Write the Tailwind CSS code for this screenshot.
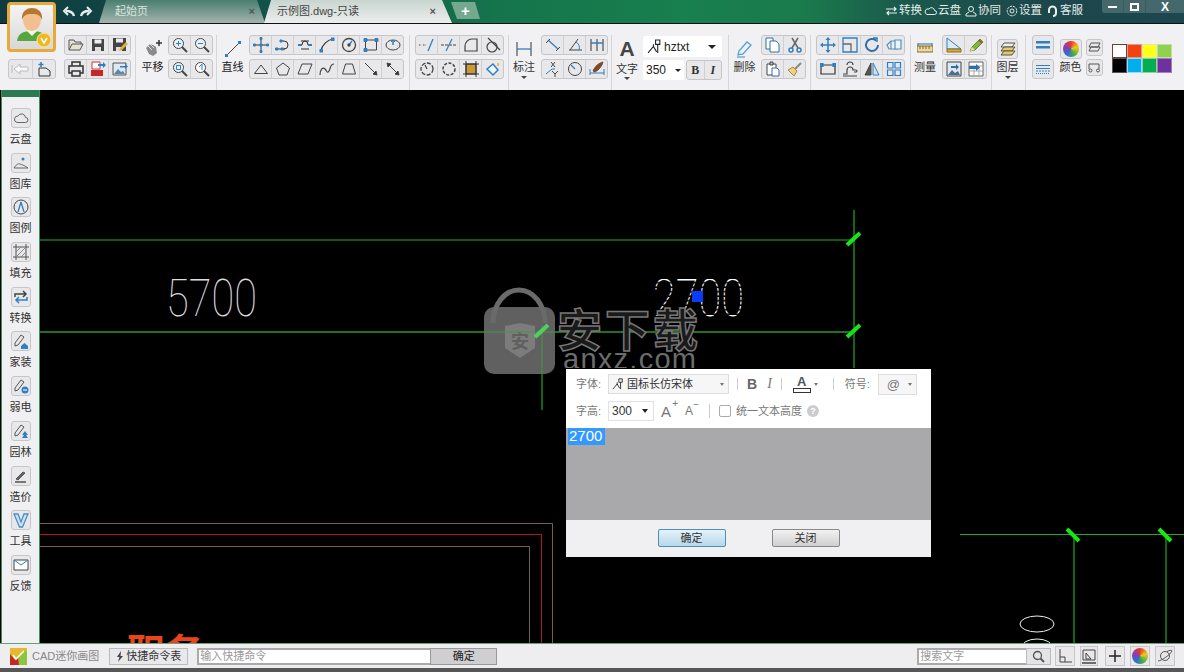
<!DOCTYPE html>
<html lang="en">
  <head>
    <meta charset="UTF-8" />
    <script src="https://cdn.jsdelivr.net/npm/@tailwindcss/browser@4"></script>
    <title>CAD迷你画图</title>
  </head>

  <body class="w-[1184px] h-[672px] overflow-hidden bg-black font-['Liberation_Sans','Noto_Sans_CJK_SC',sans-serif] text-[#333]">
    <div class="relative flex flex-col h-[672px]">

      <!-- title bar -->
      <div class="relative flex h-6 shrink-0 border-b border-[#111] bg-[linear-gradient(90deg,#103a40_0%,#135549_25%,#15744c_42%,#187f4e_58%,#1a7a4c_68%,#1b5a4c_76%,#1c474b_88%,#1d4650_100%)]">
        <!-- undo redo -->
        <div class="flex gap-[5px] ml-[62px] mt-[6px] h-3">
          <svg width="13" height="11" viewBox="0 0 13 11" fill="none" stroke="#e6eeee" stroke-width="2.4"><path d="M12 10C11 6 8 5 4 5"/><path d="M6 1L2 5l4 4" stroke-width="2"/></svg>
          <svg width="13" height="11" viewBox="0 0 13 11" fill="none" stroke="#e6eeee" stroke-width="2.4"><path d="M1 10C2 6 5 5 9 5"/><path d="M7 1l4 4-4 4" stroke-width="2"/></svg>
        </div>
        <!-- tabs -->
        <div class="flex items-center ml-[6px] w-[166px] h-[23px] pl-[16px] pr-[8px] justify-between text-[11px] text-[#d9e4df] [clip-path:polygon(7px_0,158px_0,166px_100%,0_100%)] bg-[linear-gradient(180deg,#4a7f70,#a4b3ae)]">
          <span>起始页</span>
          <span class="text-[11px] font-bold text-[#555] mr-[2px]">×</span>
        </div>
        <div class="flex items-center -ml-[1px] w-[188px] h-[23px] pl-[13px] pr-[8px] justify-between text-[11px] text-[#444] [clip-path:polygon(7px_0,178px_0,188px_100%,0_100%)] bg-[linear-gradient(180deg,#c9d5d0,#eceeed)]">
          <span>示例图.dwg-只读</span>
          <span class="font-bold text-[#555] mr-[8px]">×</span>
        </div>
        <div class="flex items-center justify-center ml-[-1px] mt-[2px] w-[29px] h-[17px] text-[15px] leading-none font-bold text-white [clip-path:polygon(0_0,24px_0,29px_100%,6px_100%)] bg-[#74a88f]">+</div>
        <!-- right menu -->
        <div class="absolute left-[885px] top-[2px] flex items-center h-[18px] text-[11.500px] text-[#e4ebea]">
          <svg width="13" height="12" viewBox="0 0 13 12" fill="none" stroke="#e6eeee" stroke-width="1.2"><path d="M1 4h10M9 2l2 2-2 2M12 8H2M4 6L2 8l2 2"/></svg>
          <span class="ml-px">转换</span>
          <svg class="ml-[2px]" width="13" height="10" viewBox="0 0 13 10" fill="none" stroke="#e6eeee"><path d="M3 8.500h7.500a2 2 0 000-4A3 3 0 005 3 2.800 2.800 0 003 8.500z"/></svg>
          <span class="ml-px">云盘</span>
          <svg class="ml-[4px]" width="12" height="12" viewBox="0 0 12 12" fill="none" stroke="#e6eeee"><circle cx="6" cy="4" r="2.500"/><path d="M1 11V9l3-2M11 11V9L8 7M1 11h10"/></svg>
          <span class="ml-px">协同</span>
          <svg class="ml-[5px]" width="12" height="12" viewBox="0 0 12 12" fill="none" stroke="#e6eeee"><circle cx="6" cy="6" r="2"/><circle cx="6" cy="6" r="4.800" stroke-dasharray="2.500 0.800"/></svg>
          <span class="ml-px">设置</span>
          <svg class="ml-[5px]" width="11" height="13" viewBox="0 0 11 13" fill="none" stroke="#e6eeee" stroke-width="2"><path d="M2 8V5a3.500 3.500 0 017 0v3a3 3 0 01-3 3"/></svg>
          <span class="ml-[2px]">客服</span>
        </div>
        <!-- window buttons -->
        <div class="absolute left-[1102px] top-0 flex h-[13px] w-[82px] rounded-bl-[3px] bg-[#5f7f7f]/60 text-white">
          <div class="w-[22px] flex items-center justify-center border-r border-[#3d5c5c]"><div class="w-[9px] h-[2px] bg-white"></div></div>
          <div class="w-[22px] flex items-center justify-center border-r border-[#3d5c5c]"><div class="w-[9px] h-[8px] border-2 border-white"></div></div>
          <div class="flex-1 flex items-center justify-center text-[12px] leading-none font-bold">X</div>
        </div>
      </div>

      <!-- avatar -->
      <div class="absolute left-[7px] top-[2px] z-10 w-[49px] h-[50px] rounded-[4px] border-[3px] border-[#e8a93c] bg-[linear-gradient(180deg,#f4f4f4,#d8d8d8)] flex items-center justify-center">
        <svg width="38" height="42" viewBox="0 0 38 42">
          <path d="M4 35c1-8 7-10 15-10s14 2 15 10z" fill="#58a73c"/>
          <path d="M14 25l5 5 5-5-2-3h-6z" fill="#f3f3f0"/>
          <ellipse cx="19" cy="14" rx="9" ry="11" fill="#f2c08e"/>
          <path d="M9 14C8 5 14 2 19 2s11 3 10 12c-2-5-4-6-10-6s-8 1-10 6z" fill="#b5782f"/>
          <circle cx="31" cy="34" r="7" fill="#f0b820" stroke="#fbe7a0"/>
          <path d="M28 32l3 5 3-5" fill="none" stroke="#fff" stroke-width="1.500"/>
        </svg>
      </div>

      <!-- ribbon toolbar -->
      <div class="flex h-[66px] shrink-0 pt-[11px] bg-[#f1f0f3] text-[11px] leading-none">
        <div class="ml-[8px] w-[48px] flex flex-col justify-end h-11">
          <div class="flex h-5 rounded-[3px] border border-[#c6c6c8] bg-[#e8e8ea]">
            <div class="flex-1 flex items-center justify-center border-r border-[#d0d0d2]"><svg width="18" height="14" viewBox="0 0 18 14" fill="#f8f8f8" stroke="#bbb"><path d="M3 7l6-5v3h8v4H9v3z"/><path d="M1 3v8"/></svg></div>
            <div class="flex-1 flex items-center justify-center"><svg width="16" height="16" viewBox="0 0 16 16" fill="none" stroke="#333"><path d="M3 7h7l4 3v5H3z"/><path d="M5 1v5M2.500 3.500h5" stroke="#2f7fc1" stroke-width="1.500"/></svg></div>
          </div>
        </div>

        <div class="ml-[8px] w-[67px] flex flex-col gap-1">
          <div class="flex h-5 rounded-[3px] border border-[#c6c6c8] bg-[#e8e8ea]">
            <div class="flex-1 flex items-center justify-center border-r border-[#d0d0d2]"><svg width="16" height="14" viewBox="0 0 16 14" fill="#e5e2d4" stroke="#555"><path d="M1 12V2h5l1 2h6v2"/><path d="M1 12l3-6h11l-3 6z"/></svg></div>
            <div class="flex-1 flex items-center justify-center border-r border-[#d0d0d2]"><svg width="14" height="14" viewBox="0 0 14 14" fill="#444"><path d="M1 1h12v12H1z"/><path d="M3.500 1.500h7v4h-7z" fill="#eee"/><path d="M4 9h6v4H4z" fill="#ddd"/></svg></div>
            <div class="flex-1 flex items-center justify-center"><svg width="16" height="16" viewBox="0 0 16 16" fill="#444"><path d="M1 1h13v13H1z"/><path d="M4 1.500h7v4H4z" fill="#eee"/><path d="M4 10h6v4H4z" fill="#ddd"/><path d="M7 14l1-3 6-6 2 2-6 6z" fill="#e0b040"/></svg></div>
          </div>
          <div class="flex h-5 rounded-[3px] border border-[#c6c6c8] bg-[#e8e8ea]">
            <div class="flex-1 flex items-center justify-center border-r border-[#d0d0d2]"><svg width="16" height="16" viewBox="0 0 16 16" fill="none" stroke="#333" stroke-width="1.500"><path d="M4 5V1h8v4M4 12H1V5h14v7h-3M4 10h8v5H4z"/></svg></div>
            <div class="flex-1 flex items-center justify-center border-r border-[#d0d0d2]"><svg width="16" height="16" viewBox="0 0 16 16"><path d="M2 1h8v7H2z" fill="#fff" stroke="#c33"/><path d="M1 9h12v6H1z" fill="#c62828"/><path d="M8 3h5V1l3 3-3 3V5H8z" fill="#2f7fc1"/></svg></div>
            <div class="flex-1 flex items-center justify-center"><svg width="16" height="16" viewBox="0 0 16 16"><path d="M1 2h13v12H1z" fill="#dfe8f0" stroke="#555"/><path d="M2 13l4-5 3 3 2-1 2 3z" fill="#5c87a8"/><path d="M8 5h5V3l3 2.500L13 8V6.500H8z" fill="#2f7fc1"/></svg></div>
          </div>
        </div>

        <div class="ml-[4px] w-px h-[56px] bg-[#d6d6d8]"></div>

        <div class="ml-[5px] w-[23px] flex flex-col items-center">
          <svg class="mt-[3px]" width="20" height="20" viewBox="0 0 20 20"><path d="M3 10l4-4 3 1 3 2 1 6-4 3-4-2z" fill="#8a8a8a"/><path d="M5 8l4 4M7 6l4 4" stroke="#ddd"/><path d="M16 2v6M13 5h6" stroke="#333" stroke-width="1.500"/></svg>
          <span class="mt-[4px] text-[#222]">平移</span>
        </div>

        <div class="ml-[4px] w-[45px] flex flex-col gap-1">
          <div class="flex h-5 rounded-[3px] border border-[#c6c6c8] bg-[#e8e8ea]">
            <div class="flex-1 flex items-center justify-center border-r border-[#d0d0d2]"><svg width="16" height="16" viewBox="0 0 16 16" fill="#e8f2fa" stroke="#444"><circle cx="6.500" cy="6.500" r="5"/><path d="M10 10l5 5" stroke-width="2"/><path d="M4 6.500h5M6.500 4v5" stroke="#2f7fc1"/></svg></div>
            <div class="flex-1 flex items-center justify-center"><svg width="16" height="16" viewBox="0 0 16 16" fill="#e8f2fa" stroke="#444"><circle cx="6.500" cy="6.500" r="5"/><path d="M10 10l5 5" stroke-width="2"/><path d="M4 6.500h5" stroke="#2f7fc1"/></svg></div>
          </div>
          <div class="flex h-5 rounded-[3px] border border-[#c6c6c8] bg-[#e8e8ea]">
            <div class="flex-1 flex items-center justify-center border-r border-[#d0d0d2]"><svg width="16" height="16" viewBox="0 0 16 16" fill="#e8f2fa" stroke="#444"><circle cx="6.500" cy="6.500" r="5"/><path d="M10 10l5 5" stroke-width="2"/><path d="M4.500 4.500h4v4h-4z" stroke="#2f7fc1"/></svg></div>
            <div class="flex-1 flex items-center justify-center"><svg width="16" height="16" viewBox="0 0 16 16" fill="#fff" stroke="#444"><circle cx="6.500" cy="6.500" r="5"/><path d="M10 10l5 5" stroke-width="2"/><path d="M5 6l3-3v6" fill="none" stroke="#2f7fc1"/></svg></div>
          </div>
        </div>

        <div class="ml-[3px] w-px h-[56px] bg-[#d6d6d8]"></div>

        <div class="ml-[4px] w-[23px] flex flex-col items-center">
          <svg class="mt-[5px]" width="18" height="18" viewBox="0 0 18 18" fill="none"><path d="M2 16L16 2" stroke="#444"/><rect x="1" y="14" width="3" height="3" fill="#2f7fc1"/><rect x="14" y="1" width="3" height="3" fill="#2f7fc1"/></svg>
          <span class="mt-[4px] text-[#222]">直线</span>
        </div>

        <!-- draw group -->
        <div class="ml-[5px] w-[155px] flex flex-col gap-1">
          <div class="flex h-5 rounded-[3px] border border-[#c6c6c8] bg-[#e8e8ea]">
            <div class="flex-1 flex items-center justify-center border-r border-[#d0d0d2]"><svg width="16" height="16" viewBox="0 0 16 16" fill="#2f7fc1" stroke="#2f7fc1"><path d="M1 8h14M8 1v14" stroke="#333"/><path d="M0.500 7h2v2h-2zM7 0.500h2v2H7zM7 13.500h2v2H7zM13.500 7h2v2h-2zM7 7h2v2H7z"/></svg></div>
            <div class="flex-1 flex items-center justify-center border-r border-[#d0d0d2]"><svg width="16" height="16" viewBox="0 0 16 16" fill="none" stroke="#333"><path d="M2 12h8M6 4h3a4 4 0 010 8"/><path d="M0.500 11h2.500v2H0.500zM6 11h2.500v2H6zM5 3h2v2H5z" fill="#2f7fc1" stroke="#2f7fc1"/></svg></div>
            <div class="flex-1 flex items-center justify-center border-r border-[#d0d0d2]"><svg width="16" height="16" viewBox="0 0 16 16" fill="none" stroke="#333"><path d="M4 4h8M4 12h8"/><path d="M1 8h4M11 8h4" stroke="#2f7fc1" stroke-width="2"/><path d="M5 8a3 4 0 016 0" /></svg></div>
            <div class="flex-1 flex items-center justify-center border-r border-[#d0d0d2]"><svg width="16" height="16" viewBox="0 0 16 16" fill="none" stroke="#333"><path d="M2 14C3 8 8 3 14 2" stroke-width="1.200"/><rect x="1" y="12.500" width="2.500" height="2.500" fill="#2f7fc1" stroke="#2f7fc1"/><rect x="12.500" y="1" width="2.500" height="2.500" fill="#2f7fc1" stroke="#2f7fc1"/></svg></div>
            <div class="flex-1 flex items-center justify-center border-r border-[#d0d0d2]"><svg width="16" height="16" viewBox="0 0 16 16" fill="none" stroke="#444" stroke-width="1.300"><circle cx="8" cy="8" r="6.500"/><path d="M8 8l3-4" stroke="#2f7fc1"/><circle cx="8" cy="8" r="1" fill="#2f7fc1"/></svg></div>
            <div class="flex-1 flex items-center justify-center border-r border-[#d0d0d2]"><svg width="16" height="16" viewBox="0 0 16 16" fill="none" stroke="#444"><path d="M2.500 3h11v10h-11z"/><path d="M1 1.500h3v3H1zM12 1.500h3v3h-3zM1 11.500h3v3H1z" fill="#2f7fc1" stroke="#2f7fc1"/></svg></div>
            <div class="flex-1 flex items-center justify-center"><svg width="16" height="16" viewBox="0 0 16 16" fill="none" stroke="#444"><ellipse cx="8" cy="8" rx="7" ry="5"/><path d="M8 8V3" stroke="#2f7fc1" stroke-width="1.500"/><path d="M6 5l2-2 2 2" stroke="#2f7fc1"/></svg></div>
          </div>
          <div class="flex h-5 rounded-[3px] border border-[#c6c6c8] bg-[#e8e8ea]">
            <div class="flex-1 flex items-center justify-center border-r border-[#d0d0d2]"><svg width="16" height="16" viewBox="0 0 16 16" fill="none" stroke="#444"><path d="M1.500 12.500L8 4l6.500 8.500z"/></svg></div>
            <div class="flex-1 flex items-center justify-center border-r border-[#d0d0d2]"><svg width="16" height="16" viewBox="0 0 16 16" fill="none" stroke="#444"><path d="M8 2l6.500 5-2.500 7H4L1.500 7z"/></svg></div>
            <div class="flex-1 flex items-center justify-center border-r border-[#d0d0d2]"><svg width="16" height="16" viewBox="0 0 16 16" fill="none" stroke="#444"><path d="M5 3h10l-4 10H1z"/></svg></div>
            <div class="flex-1 flex items-center justify-center border-r border-[#d0d0d2]"><svg width="16" height="16" viewBox="0 0 16 16" fill="none" stroke="#444" stroke-width="1.200"><path d="M1 14c0-6 3-8 5-6s2 5 4 2 1-7 5-7"/></svg></div>
            <div class="flex-1 flex items-center justify-center border-r border-[#d0d0d2]"><svg width="16" height="16" viewBox="0 0 16 16" fill="none" stroke="#444"><path d="M4.500 3h7l3 10h-13z"/></svg></div>
            <div class="flex-1 flex items-center justify-center border-r border-[#d0d0d2]"><svg width="16" height="16" viewBox="0 0 16 16" fill="#333" stroke="#444"><path d="M2 2l10 10"/><path d="M14 14l-4-1 3-3z"/></svg></div>
            <div class="flex-1 flex items-center justify-center"><svg width="16" height="16" viewBox="0 0 16 16" fill="#333" stroke="#444"><path d="M3 3l10 10"/><path d="M14 14l-4-1 3-3zM2 2l4 1-3 3z"/></svg></div>
          </div>
        </div>

        <div class="ml-[5px] w-px h-[56px] bg-[#d6d6d8]"></div>

        <!-- modify group -->
        <div class="ml-[5px] w-[89px] flex flex-col gap-1">
          <div class="flex h-5 rounded-[3px] border border-[#c6c6c8] bg-[#e8e8ea]">
            <div class="flex-1 flex items-center justify-center border-r border-[#d0d0d2]"><svg width="16" height="16" viewBox="0 0 16 16" fill="none" stroke="#444"><path d="M0 8h2M4 8h3" stroke-dasharray="1.500 1"/><path d="M14 2L9 14" stroke="#2f7fc1" stroke-width="1.300"/></svg></div>
            <div class="flex-1 flex items-center justify-center border-r border-[#d0d0d2]"><svg width="16" height="16" viewBox="0 0 16 16" fill="none" stroke="#444"><path d="M0 8h16" stroke-dasharray="3 1"/><path d="M11 2L5 14" stroke="#2f7fc1" stroke-width="1.300"/></svg></div>
            <div class="flex-1 flex items-center justify-center border-r border-[#d0d0d2]"><svg width="16" height="16" viewBox="0 0 16 16" fill="none" stroke="#444" stroke-width="1.200"><path d="M2 14V9a7 7 0 017-7h5v12z"/></svg></div>
            <div class="flex-1 flex items-center justify-center"><svg width="16" height="16" viewBox="0 0 16 16" fill="none" stroke="#444" stroke-width="1.200"><circle cx="7" cy="10" r="5"/><path d="M3 1l12 12"/></svg></div>
          </div>
          <div class="flex h-5 rounded-[3px] border border-[#c6c6c8] bg-[#e8e8ea]">
            <div class="flex-1 flex items-center justify-center border-r border-[#d0d0d2]"><svg width="16" height="16" viewBox="0 0 16 16" fill="none" stroke="#444" stroke-width="1.300"><circle cx="8" cy="8" r="6" stroke-dasharray="4 1.500"/><path d="M6 4l2 4" /></svg></div>
            <div class="flex-1 flex items-center justify-center border-r border-[#d0d0d2]"><svg width="16" height="16" viewBox="0 0 16 16" fill="none" stroke="#444" stroke-width="1.500"><circle cx="8" cy="8" r="6" stroke-dasharray="3 1.500"/></svg></div>
            <div class="flex-1 flex items-center justify-center border-r border-[#d0d0d2]"><svg width="16" height="16" viewBox="0 0 16 16" fill="#c99a33" stroke="#333"><path d="M3 3h10v10H3z"/><path d="M0 3h16M0 13h16M3 0v16M13 0v16" fill="none"/></svg></div>
            <div class="flex-1 flex items-center justify-center"><svg width="16" height="16" viewBox="0 0 16 16" fill="#f2f6fa" stroke="#2f7fc1" stroke-width="1.500"><path d="M2 8l6-5 5 6-5 5z"/><path d="M13 2v3" stroke="#e8a93c"/></svg></div>
          </div>
        </div>

        <div class="ml-[4px] w-px h-[56px] bg-[#d6d6d8]"></div>

        <div class="ml-[3px] w-[24px] flex flex-col items-center">
          <svg class="mt-[5px]" width="18" height="18" viewBox="0 0 18 18" fill="none" stroke="#2f7fc1"><path d="M2 2v14M16 2v14" stroke="#333"/><path d="M2 9h14" stroke-width="1.300"/></svg>
          <span class="mt-[4px] text-[#333]">标注</span>
          <div class="mt-[3px] w-0 h-0 border-x-[3px] border-x-transparent border-t-[3px] border-t-[#444]"></div>
        </div>

        <div class="ml-[5px] w-[67px] flex flex-col gap-1">
          <div class="flex h-5 rounded-[3px] border border-[#c6c6c8] bg-[#e8e8ea]">
            <div class="flex-1 flex items-center justify-center border-r border-[#d0d0d2]"><svg width="16" height="16" viewBox="0 0 16 16" fill="none" stroke="#444"><path d="M3 3l10 9" stroke="#2f7fc1" stroke-width="1.300"/><path d="M1 6l4-4M11 14l4-4"/></svg></div>
            <div class="flex-1 flex items-center justify-center border-r border-[#d0d0d2]"><svg width="16" height="16" viewBox="0 0 16 16" fill="none" stroke="#444"><path d="M2 13h13M3 13L11 2"/><path d="M9 5a7 7 0 013 8" stroke="#2f7fc1"/></svg></div>
            <div class="flex-1 flex items-center justify-center"><svg width="16" height="16" viewBox="0 0 16 16" fill="none" stroke="#333"><path d="M2 2v12M8 2v12M14 2v12"/><path d="M2 6h12" stroke="#2f7fc1" stroke-width="1.500"/></svg></div>
          </div>
          <div class="flex h-5 rounded-[3px] border border-[#c6c6c8] bg-[#e8e8ea]">
            <div class="flex-1 flex items-center justify-center border-r border-[#d0d0d2]"><svg width="16" height="16" viewBox="0 0 16 16" fill="none" stroke="#444"><path d="M1 13l6-5 3 0" stroke="#2f7fc1"/><path d="M6 1l4 5M10 1L6 6M7 10l3 3 3-3M10 13v3"/></svg></div>
            <div class="flex-1 flex items-center justify-center border-r border-[#d0d0d2]"><svg width="16" height="16" viewBox="0 0 16 16" fill="none" stroke="#444"><circle cx="8" cy="8" r="6.500"/><path d="M8 8L4 4" stroke="#2f7fc1" stroke-width="1.300"/></svg></div>
            <div class="flex-1 flex items-center justify-center"><svg width="16" height="16" viewBox="0 0 16 16" fill="none" stroke="#2f7fc1"><path d="M1 8v6M15 8v6M1 12h14"/><path d="M4 10c2-5 6-8 10-9-1 4-4 8-8 10z" fill="#7c4a2a" stroke="#7c4a2a"/></svg></div>
          </div>
        </div>

        <div class="ml-[3px] w-px h-[56px] bg-[#d6d6d8]"></div>

        <div class="ml-[3px] w-[24px] flex flex-col items-center">
          <span class="mt-[2px] text-[21px] leading-[24px] font-bold text-[#444]">A</span>
          <span class="mt-[3px] text-[#333]">文字</span>
          <div class="mt-[2px] w-0 h-0 border-x-[3px] border-x-transparent border-t-[3px] border-t-[#444]"></div>
        </div>

        <div class="ml-[4px] w-[79px] flex flex-col gap-[3px] pt-px">
          <div class="flex items-center h-[21px] px-1 bg-white rounded-[2px] text-[12px] text-[#222]">
            <svg width="15" height="15" viewBox="0 0 14 14" fill="none" stroke="#222"><path d="M8 1h4v4H8zM1 13l5-6 3 5M6 5v3M10 5v8"/></svg>
            <span class="ml-[2px]">hztxt</span>
            <div class="ml-auto mr-[2px] w-0 h-0 border-x-4 border-x-transparent border-t-4 border-t-[#222]"></div>
          </div>
          <div class="flex gap-[2px] h-5">
            <div class="flex items-center w-[41px] px-[3px] bg-white rounded-[2px] text-[12px] text-[#222]">
              <span>350</span>
              <div class="ml-auto w-0 h-0 border-x-[3px] border-x-transparent border-t-[3px] border-t-[#222]"></div>
            </div>
            <div class="flex flex-1 rounded-[3px] border border-[#c6c6c8] bg-[#e8e8ea] font-['Liberation_Serif',serif] text-[12px] font-bold text-[#333]">
              <div class="flex-1 flex items-center justify-center border-r border-[#d0d0d2]">B</div>
              <div class="flex-1 flex items-center justify-center italic">I</div>
            </div>
          </div>
        </div>

        <div class="ml-[6px] w-px h-[56px] bg-[#d6d6d8]"></div>

        <div class="ml-[4px] w-[23px] flex flex-col items-center">
          <svg class="mt-[5px]" width="18" height="18" viewBox="0 0 18 18" fill="#eaf3fa" stroke="#5a9fd4" stroke-width="1.300"><path d="M2 15l1-4 8-9 4 3-8 9z"/><path d="M1 17h8" stroke="#5a9fd4"/></svg>
          <span class="mt-[4px] text-[#333]">删除</span>
        </div>

        <div class="ml-[5px] w-[45px] flex flex-col gap-1">
          <div class="flex h-5 rounded-[3px] border border-[#c6c6c8] bg-[#e8e8ea]">
            <div class="flex-1 flex items-center justify-center border-r border-[#d0d0d2]"><svg width="16" height="16" viewBox="0 0 16 16" fill="#fff" stroke="#2f6fa8"><path d="M1 1h7v11H1z"/><path d="M5 4h6l3 3v8H5z"/></svg></div>
            <div class="flex-1 flex items-center justify-center"><svg width="16" height="16" viewBox="0 0 16 16" fill="none" stroke="#2f7fc1" stroke-width="1.500"><circle cx="4" cy="13" r="2"/><circle cx="12" cy="13" r="2"/><path d="M5 11l6-10M11 11L5 1" stroke="#666"/></svg></div>
          </div>
          <div class="flex h-5 rounded-[3px] border border-[#c6c6c8] bg-[#e8e8ea]">
            <div class="flex-1 flex items-center justify-center border-r border-[#d0d0d2]"><svg width="16" height="16" viewBox="0 0 16 16" fill="#fff" stroke="#444"><path d="M2 3h9v11H2z"/><path d="M5 1h3v3H5z" fill="#bbb"/><path d="M7 7h5l2 2v6H7z" stroke="#2f6fa8"/></svg></div>
            <div class="flex-1 flex items-center justify-center"><svg width="16" height="16" viewBox="0 0 16 16"><path d="M1 9l5-3 4 4-3 5z" fill="#f0d080" stroke="#b08a30"/><path d="M8 8l6-6" stroke="#888" stroke-width="2"/></svg></div>
          </div>
        </div>

        <div class="ml-[4px] w-px h-[56px] bg-[#d6d6d8]"></div>

        <div class="ml-[5px] w-[89px] flex flex-col gap-1">
          <div class="flex h-5 rounded-[3px] border border-[#c6c6c8] bg-[#e8e8ea]">
            <div class="flex-1 flex items-center justify-center border-r border-[#d0d0d2]"><svg width="16" height="16" viewBox="0 0 16 16" fill="#2f7fc1" stroke="#2f7fc1"><path d="M1 8h14M8 1v14" stroke-width="1.500"/><path d="M8 0l2.500 3h-5zM8 16l2.500-3h-5zM0 8l3-2.500v5zM16 8l-3-2.500v5z" stroke="none"/></svg></div>
            <div class="flex-1 flex items-center justify-center border-r border-[#d0d0d2]"><svg width="16" height="16" viewBox="0 0 16 16" fill="none" stroke="#2f7fc1" stroke-width="1.300"><path d="M1 1h14v14H1z"/><path d="M1 7h8v8" stroke="#666"/></svg></div>
            <div class="flex-1 flex items-center justify-center border-r border-[#d0d0d2]"><svg width="16" height="16" viewBox="0 0 16 16" fill="none" stroke="#2f6fa8" stroke-width="2"><path d="M12.200 3.700A6 6 0 1 0 14 8"/><path d="M9 1l4 0 0 4" stroke-width="1.300"/></svg></div>
            <div class="flex-1 flex items-center justify-center"><svg width="16" height="16" viewBox="0 0 16 16" fill="#eaf3fa" stroke="#5a8fb8" stroke-width="1.200"><path d="M1 8l4-4h6v8H3z"/><path d="M9 3h6v9H9z"/><path d="M5 4v8"/></svg></div>
          </div>
          <div class="flex h-5 rounded-[3px] border border-[#c6c6c8] bg-[#e8e8ea]">
            <div class="flex-1 flex items-center justify-center border-r border-[#d0d0d2]"><svg width="16" height="16" viewBox="0 0 16 16" fill="none" stroke="#333" stroke-width="1.200"><path d="M1 4h14v9H1z"/><path d="M0 2.500h3v3H0zM13 2.500h3v3h-3z" fill="#2f7fc1" stroke="#2f7fc1"/></svg></div>
            <div class="flex-1 flex items-center justify-center border-r border-[#d0d0d2]"><svg width="16" height="16" viewBox="0 0 16 16" fill="none" stroke="#444" stroke-width="1.200"><path d="M1 13h4V9a3 3 0 016 0h3a1 1 0 010 2h-2M1 15h14M5 4a3 3 0 016 0"/></svg></div>
            <div class="flex-1 flex items-center justify-center border-r border-[#d0d0d2]"><svg width="16" height="16" viewBox="0 0 16 16" fill="#555" stroke="#444"><path d="M7 2v12H1z"/><path d="M9 2v12h6z" fill="#cfe2f2" stroke="#2f7fc1"/></svg></div>
            <div class="flex-1 flex items-center justify-center"><svg width="16" height="16" viewBox="0 0 16 16" fill="none" stroke="#2f7fc1" stroke-width="1.200"><path d="M1.500 1.500h5.500v5.500H1.500zM9 1.500h5.500v5.500H9zM1.500 9h5.500v5.500H1.500zM9 9h5.500v5.500H9z"/></svg></div>
          </div>
        </div>

        <div class="ml-[5px] w-px h-[56px] bg-[#d6d6d8]"></div>

        <div class="ml-[2px] w-[24px] flex flex-col items-center">
          <svg class="mt-[7px]" width="16" height="14" viewBox="0 0 16 14"><path d="M0 4h16v6H0z" fill="#e5d9a8" stroke="#8c6a1e" transform="translate(0 0)"/><path d="M3 4v3M6 4v3M9 4v3M12 4v3" stroke="#8c6a1e"/><path d="M1 1v3M15 1v3M1 2h14" stroke="#2f6fa8" fill="none"/></svg>
          <span class="mt-[6px] text-[#333]">测量</span>
        </div>

        <div class="ml-[5px] w-[45px] flex flex-col gap-1">
          <div class="flex h-5 rounded-[3px] border border-[#c6c6c8] bg-[#e8e8ea]">
            <div class="flex-1 flex items-center justify-center border-r border-[#d0d0d2]"><svg width="16" height="16" viewBox="0 0 16 16" fill="#dcebf7" stroke="#2f7fc1"><path d="M1 1v11h14z"/><path d="M1 12h14v3H1z" fill="#d9a936" stroke="#8c6a1e"/></svg></div>
            <div class="flex-1 flex items-center justify-center"><svg width="16" height="16" viewBox="0 0 16 16"><path d="M2 14l2-4 8-8 3 3-8 8z" fill="#7cb83c" stroke="#5a8a2a"/><path d="M2 14l2-4 3 3z" fill="#f0d9a0"/><path d="M11 3l3 3" stroke="#c33" stroke-width="1.500"/></svg></div>
          </div>
          <div class="flex h-5 rounded-[3px] border border-[#c6c6c8] bg-[#e8e8ea]">
            <div class="flex-1 flex items-center justify-center border-r border-[#d0d0d2]"><svg width="16" height="16" viewBox="0 0 16 16"><path d="M1 1h14v14H1z" fill="#dfe8f0" stroke="#444"/><path d="M2 14l4-5 3 3 3-2 2 4z" fill="#4a6f8c"/><path d="M5 5h5V3l3 3-3 3V7H5z" fill="#2f6fa8"/></svg></div>
            <div class="flex-1 flex items-center justify-center"><svg width="16" height="16" viewBox="0 0 16 16" fill="#fff" stroke="#666"><path d="M1 1h14v14H1z"/><path d="M1 5h14M6 5v10M11 5v10M1 10h14" stroke="#aaa"/><path d="M1 5h7V3l4 3.500L8 10V8H1z" fill="#2f6fa8" stroke="none"/></svg></div>
          </div>
        </div>

        <div class="ml-[4px] w-px h-[56px] bg-[#d6d6d8]"></div>

        <div class="ml-[2px] w-[27px] flex flex-col items-center">
          <div class="mt-[4px] w-[21px] h-5 flex items-center justify-center rounded-[3px] border border-[#c6c6c8] bg-[#e8e8ea]">
            <svg width="16" height="16" viewBox="0 0 16 16" fill="#eee" stroke="#555"><path d="M4 2h11l-3 4H1z"/><path d="M4 6h11l-3 4H1z" fill="#e8c860"/><path d="M4 10h11l-3 4H1z" fill="#e8c860"/></svg>
          </div>
          <span class="mt-[3px] text-[#333]">图层</span>
          <div class="mt-[3px] w-0 h-0 border-x-[3px] border-x-transparent border-t-[3px] border-t-[#444]"></div>
        </div>

        <div class="ml-[4px] w-px h-[56px] bg-[#d6d6d8]"></div>

        <div class="ml-[6px] w-[22px] flex flex-col gap-1">
          <div class="h-5 flex items-center justify-center rounded-[3px] border border-[#c6c6c8] bg-[#e8e8ea]">
            <svg width="16" height="12" viewBox="0 0 16 12" fill="#2f7fc1"><path d="M1 2h14v2.500H1zM1 7h14v2.500H1z"/></svg>
          </div>
          <div class="h-5 flex items-center justify-center rounded-[3px] border border-[#c6c6c8] bg-[#e8e8ea]">
            <svg width="16" height="12" viewBox="0 0 16 12" fill="none" stroke="#2f7fc1"><path d="M1 2.500h14M1 5.500h14" /><path d="M1 8h14" stroke-dasharray="2 1"/><path d="M1 10.500h14" stroke-dasharray="1 1"/></svg>
          </div>
        </div>

        <div class="ml-[5px] w-[23px] flex flex-col items-center">
          <div class="mt-[4px] w-[22px] h-5 flex items-center justify-center rounded-[3px] border border-[#c6c6c8] bg-[#e8e8ea]">
            <div class="w-4 h-4 rounded-full bg-[conic-gradient(#e53b2e,#f2c81e,#4bb43c,#2e6fd0,#8a3ab0,#e53b2e)]"></div>
          </div>
          <span class="mt-[3px] text-[#333]">颜色</span>
        </div>

        <div class="ml-[4px] w-[17px] flex flex-col gap-[3px] pt-[4px]">
          <div class="h-[17px] flex items-center justify-center rounded-[3px] border border-[#c6c6c8] bg-[#e8e8ea]">
            <svg width="13" height="11" viewBox="0 0 13 11" fill="none" stroke="#555"><path d="M3 1h9L10 5H1zM3 5h9l-2 4H1z"/></svg>
          </div>
          <div class="h-[17px] flex items-center justify-center rounded-[3px] border border-[#c6c6c8] bg-[#e8e8ea]">
            <svg width="13" height="11" viewBox="0 0 13 11" fill="none" stroke="#555"><path d="M1 2h10v5M1 2v5"/><circle cx="2.500" cy="8.500" r="1.500"/><circle cx="10" cy="8.500" r="1.500"/></svg>
          </div>
        </div>

        <div class="ml-[9px] grid grid-cols-[repeat(4,15px)] grid-rows-[14px_15px] mt-[9px] h-[29px]">
          <div class="bg-white border border-[#7a3a3a]"></div>
          <div class="bg-[#f5410f] border border-[#d9a090]"></div>
          <div class="bg-[#ffff17] border border-[#e8e8a0]"></div>
          <div class="bg-[#90d14f] border border-[#c0e0a0]"></div>
          <div class="bg-black border border-[#555]"></div>
          <div class="bg-[#00aef0] border border-[#a0d8f0]"></div>
          <div class="bg-[#00b050] border border-[#90d0a8]"></div>
          <div class="bg-[#7030a0] border border-[#a080c0]"></div>
        </div>
      </div>

      <!-- main area -->
      <div class="flex flex-1 min-h-0">
        <!-- left panel -->
        <div class="w-[39px] ml-px shrink-0 flex flex-col border-x border-[#3b8f62] bg-[#f0eff2] text-[11px] leading-none text-[#333]">
          <div class="h-[7px] bg-[#2b7a52] shrink-0"></div>
          <div class="flex flex-col items-center pt-[11px]">
            <div class="flex flex-col items-center h-[44.700px]">
              <div class="w-5 h-5 flex items-center justify-center rounded-[3px] border border-[#c6c6c8] bg-[#e8e8ea]"><svg width="16" height="12" viewBox="0 0 16 12" fill="none" stroke="#666"><path d="M4 10.500h8.500a2.500 2.500 0 000-5A4 4 0 005 4a3.300 3.300 0 00-1 6.500z"/></svg></div>
              <span class="mt-[6px]">云盘</span>
            </div>
            <div class="flex flex-col items-center h-[44.700px]">
              <div class="w-5 h-5 flex items-center justify-center rounded-[3px] border border-[#c6c6c8] bg-[#e8e8ea]"><svg width="16" height="14" viewBox="0 0 16 14" fill="none" stroke="#666"><path d="M1 12c2-3 4-5 6-4s4 1 8 4z"/><circle cx="10" cy="3" r="1.500" fill="#2f7fc1" stroke="none"/></svg></div>
              <span class="mt-[6px]">图库</span>
            </div>
            <div class="flex flex-col items-center h-[44.700px]">
              <div class="w-5 h-5 flex items-center justify-center rounded-[3px] border border-[#c6c6c8] bg-[#e8e8ea]"><svg width="16" height="16" viewBox="0 0 16 16" fill="none" stroke="#444"><circle cx="8" cy="8" r="7"/><path d="M8 3L5 13M8 3l3 10" stroke="#2f7fc1" stroke-width="1.300"/></svg></div>
              <span class="mt-[6px]">图例</span>
            </div>
            <div class="flex flex-col items-center h-[44.700px]">
              <div class="w-5 h-5 flex items-center justify-center rounded-[3px] border border-[#c6c6c8] bg-[#e8e8ea]"><svg width="16" height="16" viewBox="0 0 16 16" fill="none" stroke="#555"><path d="M3 0v16M13 0v16M0 3h16M0 13h16"/><path d="M3 8l5-5M3 13L13 3M8 13l5-5" stroke="#888"/></svg></div>
              <span class="mt-[6px]">填充</span>
            </div>
            <div class="flex flex-col items-center h-[44.700px]">
              <div class="w-5 h-5 flex items-center justify-center rounded-[3px] border border-[#c6c6c8] bg-[#e8e8ea]"><svg width="16" height="16" viewBox="0 0 16 16" fill="none" stroke-width="1.500"><path d="M2 8V5h11M10 2l3 3-3 3" stroke="#444"/><path d="M14 8v3H3M6 8l-3 3 3 3" stroke="#2f7fc1"/></svg></div>
              <span class="mt-[6px]">转换</span>
            </div>
            <div class="flex flex-col items-center h-[44.700px]">
              <div class="w-5 h-5 flex items-center justify-center rounded-[3px] border border-[#c6c6c8] bg-[#e8e8ea]"><svg width="16" height="16" viewBox="0 0 16 16" fill="none" stroke="#555"><path d="M2 10l6-8 3 2-6 8-3 1z"/><path d="M8 13l3.500-3 3.500 3v3H8z" fill="#2f7fc1" stroke="none"/></svg></div>
              <span class="mt-[6px]">家装</span>
            </div>
            <div class="flex flex-col items-center h-[44.700px]">
              <div class="w-5 h-5 flex items-center justify-center rounded-[3px] border border-[#c6c6c8] bg-[#e8e8ea]"><svg width="16" height="16" viewBox="0 0 16 16" fill="none" stroke="#555"><path d="M2 10l6-8 3 2-6 8-3 1z"/><circle cx="12" cy="12" r="3.500" fill="#2f7fc1" stroke="none"/><path d="M10 12h4" stroke="#fff"/></svg></div>
              <span class="mt-[6px]">弱电</span>
            </div>
            <div class="flex flex-col items-center h-[44.700px]">
              <div class="w-5 h-5 flex items-center justify-center rounded-[3px] border border-[#c6c6c8] bg-[#e8e8ea]"><svg width="16" height="16" viewBox="0 0 16 16" fill="none" stroke="#555"><path d="M2 10l6-8 3 2-6 8-3 1z"/><path d="M12 8l3 4h-2l2 3H9l2-3H9z" fill="#2f7fc1" stroke="none"/></svg></div>
              <span class="mt-[6px]">园林</span>
            </div>
            <div class="flex flex-col items-center h-[44.700px]">
              <div class="w-5 h-5 flex items-center justify-center rounded-[3px] border border-[#c6c6c8] bg-[#e8e8ea]"><svg width="16" height="16" viewBox="0 0 16 16" fill="#666" stroke="#555"><path d="M3 11l7-7 2 1-7 7z"/><path d="M2 14h11" stroke-width="1.500"/></svg></div>
              <span class="mt-[6px]">造价</span>
            </div>
            <div class="flex flex-col items-center h-[44.700px]">
              <div class="w-5 h-5 flex items-center justify-center rounded-[3px] border border-[#c6c6c8] bg-[#e8e8ea]"><svg width="16" height="16" viewBox="0 0 16 16" fill="#cfe2f2" stroke="#4a8fc4" stroke-width="1.300"><path d="M1 2h4l3 8 3-8h4L9.500 15h-3z"/></svg></div>
              <span class="mt-[6px]">工具</span>
            </div>
            <div class="flex flex-col items-center h-[44.700px]">
              <div class="w-5 h-5 flex items-center justify-center rounded-[3px] border border-[#c6c6c8] bg-[#e8e8ea]"><svg width="16" height="12" viewBox="0 0 16 12" fill="#fff" stroke="#444"><path d="M1 1h14v10H1z"/><path d="M1 1l7 5 7-5" fill="none" stroke="#2f7fc1"/></svg></div>
              <span class="mt-[6px]">反馈</span>
            </div>
          </div>
        </div>

        <!-- drawing canvas -->
        <div class="relative flex-1 bg-black overflow-hidden">
          <svg class="absolute inset-0" width="1144" height="553" viewBox="40 90 1144 553" fill="none">
            <defs>
              <pattern id="dash" width="4" height="4.500" patternUnits="userSpaceOnUse">
                <rect width="4" height="3" fill="#fff"/>
              </pattern>
            </defs>
            <!-- red frames -->
            <path d="M40 523.500H552.500V644M40 546.500H529.500V644" stroke="#7d5a5a"/>
            <path d="M40 534.500H541.500V644" stroke="#b01818"/>
            <text x="127" y="666" font-size="38" font-weight="700" fill="#e8451c" font-family="'Noto Sans CJK SC',sans-serif">职务</text>
            <!-- green lines -->
            <path d="M40 240H854M40 332H854M854 210V370M542 325V410M1074 535V644M1166 535V644" stroke="#22b822" stroke-width="1.100"/>
            <path d="M960 534.500H1184" stroke="#1fae1f"/>
            <path d="M847 245l13-12M847 337l13-12M535 337l13-12M1067 529l12 12M1159 529l12 12" stroke="#19e619" stroke-width="4"/>
            <!-- dimensions -->
            <text x="166" y="316" font-size="51" font-weight="100" fill="#ddd" textLength="91" lengthAdjust="spacingAndGlyphs" font-family="Roboto,sans-serif">5700</text>
            <text x="653" y="316" font-size="51" font-weight="100" fill="url(#dash)" textLength="91" lengthAdjust="spacingAndGlyphs" font-family="Roboto,sans-serif">2700</text>
            <rect x="692" y="291" width="11" height="11" fill="#0a3cf5"/>
            <ellipse cx="1037" cy="624" rx="17" ry="8" stroke="#eee"/>
            <ellipse cx="1037" cy="648" rx="16" ry="9" stroke="#eee"/>
            <!-- watermark -->
            <path d="M493 323a22 28 0 0152 0" stroke="#6a6a6a" stroke-width="5"/>
            <rect x="484" y="307" width="71" height="67" rx="10" fill="#6a6a6a" fill-opacity="0.900"/>
            <path d="M505 326l15-3 15 3v22l-15 10-15-10z" fill="#7c7c7c"/>
            <text x="520" y="348" font-size="18" font-weight="700" fill="#5f5f5f" text-anchor="middle" font-family="'Noto Sans CJK SC',sans-serif">安</text>
            <path d="M40 332H854M542 325V374" stroke="#35a035" stroke-opacity="0.700"/>
            <path d="M535 337l13-12" stroke="#4fd060" stroke-width="4"/>
            <text x="557" y="347" font-size="45" font-weight="700" fill="#1a1a1a" stroke="#777" stroke-width="1.500" textLength="141" font-family="'Noto Sans CJK SC',sans-serif">安下载</text>
            <text x="563" y="369" font-size="29" fill="#6c6c6c" textLength="133" font-family="'Liberation Sans',sans-serif">anxz.com</text>
          </svg>

          <!-- text edit dialog -->
          <div class="absolute left-[525px] top-[278px] w-[367px] h-[190px] flex flex-col border border-black bg-white text-[11px] leading-none text-[#777]">
            <div class="h-[59px] shrink-0 pl-[10px] pt-[5px]">
              <div class="flex items-center h-5">
                <span class="w-[32px]">字体:</span>
                <div class="flex items-center w-[121px] h-[20px] px-[2px] border border-[#ddd] bg-[#f6f6f7] text-[#333]">
                  <svg width="14" height="12" viewBox="0 0 14 14" fill="none" stroke="#222"><path d="M8 1h4v4H8zM1 13l5-6 3 5M6 5v3M10 5v8"/></svg>
                  <span class="ml-[2px]">国标长仿宋体</span>
                  <div class="ml-auto mr-[2px] w-0 h-0 border-x-[2.500px] border-x-transparent border-t-[3px] border-t-[#777]"></div>
                </div>
                <div class="ml-2 w-px h-3 bg-[#ccc]"></div>
                <span class="ml-[9px] text-[14px] font-bold text-[#666]">B</span>
                <span class="ml-[10px] text-[14px] italic font-['Liberation_Serif',serif] text-[#777]">I</span>
                <div class="ml-[9px] w-px h-3 bg-[#ccc]"></div>
                <div class="ml-[11px] flex flex-col items-center w-[18px]">
                  <span class="text-[13px] leading-[12px] font-bold text-[#555]">A</span>
                  <div class="w-[18px] h-[5px] border border-[#333] bg-white"></div>
                </div>
                <div class="ml-[3px] w-0 h-0 border-x-[2.500px] border-x-transparent border-t-[3px] border-t-[#777]"></div>
                <div class="ml-[15px] w-px h-3 bg-[#ccc]"></div>
                <span class="ml-[11px]">符号:</span>
                <div class="flex items-center ml-2 w-[39px] h-[21px] pl-[8px] border border-[#ddd] bg-[#f6f6f7] text-[13px]">
                  <span>@</span>
                  <div class="ml-auto mr-[4px] w-0 h-0 border-x-[2.500px] border-x-transparent border-t-[3px] border-t-[#777]"></div>
                </div>
              </div>
              <div class="flex items-center h-5 mt-[7px]">
                <span class="w-[32px]">字高:</span>
                <div class="flex items-center w-[46px] h-[20px] px-[3px] border border-[#e2e2e2] text-[12px] text-[#333]">
                  <span>300</span>
                  <div class="ml-auto mr-[2px] w-0 h-0 border-x-[3.500px] border-x-transparent border-t-[4px] border-t-[#222]"></div>
                </div>
                <span class="relative ml-[7px] text-[15px] text-[#777]">A<span class="absolute -right-[7px] -top-[5px] text-[10px]">+</span></span>
                <span class="relative ml-[14px] text-[12px] text-[#777]">A<span class="absolute -right-[6px] -top-[5px] text-[10px]">−</span></span>
                <div class="ml-[16px] w-px h-3.5 bg-[#ccc]"></div>
                <div class="ml-[9px] w-3 h-3 rounded-[2px] border border-[#aaa] bg-white"></div>
                <span class="ml-[5px]">统一文本高度</span>
                <div class="ml-[5px] w-3 h-3 rounded-full bg-[#ccc] flex items-center justify-center text-[9px] text-white font-bold">?</div>
              </div>
            </div>
            <div class="h-[92px] shrink-0 bg-[#a9a8ab]">
              <span class="ml-[2px] inline-block w-[37px] pl-px h-[17px] leading-[16px] bg-[#3399ff] text-[15px] text-white">2700</span>
            </div>
            <div class="flex-1 flex justify-center gap-[46px] pt-[9px] bg-[#f0eff2] text-[#333]">
              <div class="w-[68px] h-[18px] flex items-center justify-center rounded-[2px] border border-[#4a90b8] bg-[linear-gradient(180deg,#e4f2fa,#b8d8ea)]">确定</div>
              <div class="w-[68px] h-[18px] flex items-center justify-center rounded-[2px] border border-[#888] bg-[linear-gradient(180deg,#f2f2f2,#cfcfcf)]">关闭</div>
            </div>
          </div>
        </div>
      </div>

      <!-- status bar -->
      <div class="relative flex items-center h-[25px] shrink-0 border-t border-[#5fa57a] bg-[#eeedf0] text-[11px] leading-none">
        <svg class="ml-[10px]" width="17" height="17" viewBox="0 0 17 17"><path d="M0 0h17v17H0z" fill="#e5b92e"/><path d="M0 17V6l5 6L15 2l2 2v13z" fill="#8cc63f"/><path d="M0 6l5 6 3-3 1 8H0z" fill="#c62828"/><path d="M3 7l3 4 8-8" stroke="#fff" stroke-width="1.500" fill="none"/></svg>
        <span class="ml-[5px] text-[#888]">CAD迷你画图</span>
        <div class="ml-[10px] w-[79px] h-[17px] flex items-center justify-center border border-[#bbb] bg-[#e9e9eb] text-[#333]">
          <svg width="8" height="11" viewBox="0 0 8 11" fill="#444"><path d="M5 0L1 6h2.500L2 11l5-6H4.500z"/></svg>
          <span class="ml-[2px]">快捷命令表</span>
        </div>
        <div class="ml-[9px] w-[233px] h-[17px] flex items-center pl-px border-2 border-[#aaa] border-r-0 bg-white text-[#999]">输入快捷命令</div>
        <div class="w-[67px] h-[17px] flex items-center justify-center border border-[#999] bg-[#cfcfd1] text-[#222]">确定</div>

        <div class="ml-[420px] w-[109px] h-[17px] flex items-center pl-px border-2 border-[#aaa] border-r-0 bg-white text-[#999]">搜索文字</div>
        <div class="w-[25px] h-[17px] flex items-center justify-center border border-[#bbb] bg-[#e4e4e6]">
          <svg width="13" height="13" viewBox="0 0 13 13" fill="none" stroke="#555" stroke-width="1.300"><circle cx="5.500" cy="5.500" r="4"/><path d="M8.500 8.500L12 12" stroke-width="1.800"/></svg>
        </div>
        <div class="ml-[4px] flex items-center gap-[5px]">
          <div class="w-5 h-5 flex items-center justify-center border border-[#c6c6c8] bg-[#e8e8ea]"><svg width="16" height="16" viewBox="0 0 16 16" fill="none" stroke="#444"><path d="M3 1v13h12M3 9h5v5"/></svg></div>
          <div class="w-[18px] h-5 flex items-center justify-center border border-[#c6c6c8] bg-[#e8e8ea]"><svg width="14" height="15" viewBox="0 0 14 15" fill="none" stroke="#444"><path d="M1 1h12v10H1zM4 10V4l5 6z"/><path d="M0 14h14" stroke-width="1.500"/></svg></div>
          <div class="ml-[2px] w-5 h-5 flex items-center justify-center border border-[#c6c6c8] bg-[#e8e8ea]"><svg width="14" height="14" viewBox="0 0 14 14" stroke="#222" stroke-width="1.500"><path d="M7 1v12M1 7h12"/></svg></div>
          <div class="w-5 h-5 flex items-center justify-center border border-[#c6c6c8] bg-[#e8e8ea]"><div class="w-4 h-4 rounded-full bg-[conic-gradient(#e53b2e,#f2c81e,#4bb43c,#2e6fd0,#8a3ab0,#e53b2e)]"></div></div>
          <div class="w-5 h-5 flex items-center justify-center border border-[#c6c6c8] bg-[#e8e8ea]"><svg width="16" height="16" viewBox="0 0 16 16" fill="none" stroke="#555"><circle cx="8" cy="8" r="4.500"/><path d="M1 13C4 13 13 7 15 3"/><path d="M10 3.500c3-1.500 5-1.500 5-.5"/></svg></div>
        </div>
      </div>

      <!-- bottom strip -->
      <div class="h-1 shrink-0 bg-[#565656]"></div>
    </div>
  </body>
</html>
